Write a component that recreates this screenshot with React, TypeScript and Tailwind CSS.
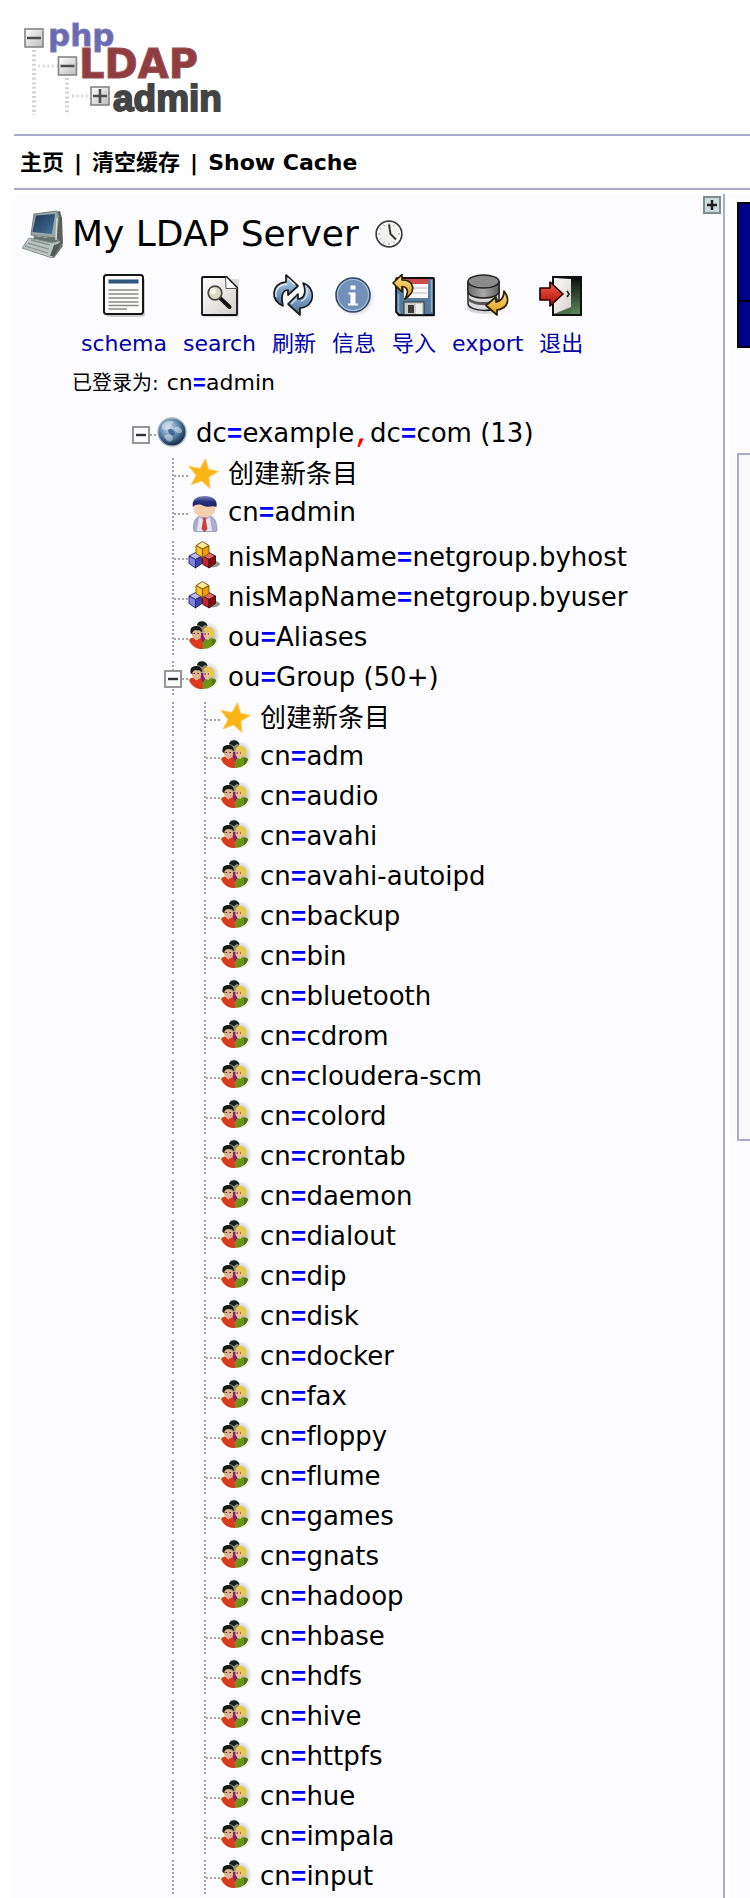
import type { ReactNode } from "react";

const DOTS = "#a6a6a6";

function SharedDefs() {
  return (
    <svg className="absolute h-0 w-0" aria-hidden="true">
      <defs>
        <linearGradient id="blue" x1="0" y1="0" x2="0" y2="1">
          <stop offset="0" stopColor="#c3d6e8" />
          <stop offset="0.5" stopColor="#7fa3c8" />
          <stop offset="1" stopColor="#44698f" />
        </linearGradient>
        <linearGradient id="gold" x1="0" y1="0" x2="0" y2="1">
          <stop offset="0" stopColor="#fbe28a" />
          <stop offset="1" stopColor="#dc9a0c" />
        </linearGradient>
        <linearGradient id="paper" x1="0" y1="0" x2="1" y2="1">
          <stop offset="0" stopColor="#ffffff" />
          <stop offset="1" stopColor="#d3d0cb" />
        </linearGradient>
        <linearGradient id="steel" x1="0" y1="0" x2="1" y2="0">
          <stop offset="0" stopColor="#6b6b6b" />
          <stop offset="0.5" stopColor="#a9a9a9" />
          <stop offset="1" stopColor="#606060" />
        </linearGradient>
        <linearGradient id="screen" x1="0" y1="0" x2="1" y2="1">
          <stop offset="0" stopColor="#1f3550" />
          <stop offset="0.6" stopColor="#34597f" />
          <stop offset="1" stopColor="#4b769c" />
        </linearGradient>
        <linearGradient id="redArrow" x1="0" y1="0" x2="0" y2="1">
          <stop offset="0" stopColor="#f0604a" />
          <stop offset="1" stopColor="#b00c04" />
        </linearGradient>
        <linearGradient id="darkDoor" x1="0" y1="0" x2="0" y2="1">
          <stop offset="0" stopColor="#0a0d0a" />
          <stop offset="1" stopColor="#5f8a5f" />
        </linearGradient>
        <linearGradient id="hair" x1="0" y1="0" x2="0" y2="1">
          <stop offset="0" stopColor="#7f88c4" />
          <stop offset="0.5" stopColor="#27307c" />
          <stop offset="1" stopColor="#1c2262" />
        </linearGradient>
        <radialGradient id="globe" cx="0.4" cy="0.35" r="0.65">
          <stop offset="0" stopColor="#d4e4f1" />
          <stop offset="0.45" stopColor="#6e97bb" />
          <stop offset="0.8" stopColor="#2d4f77" />
          <stop offset="1" stopColor="#16263c" />
        </radialGradient>
        <radialGradient id="shade">
          <stop offset="0" stopColor="#000000" stopOpacity="0.4" />
          <stop offset="1" stopColor="#000000" stopOpacity="0" />
        </radialGradient>
        <linearGradient id="logoBox" x1="0" y1="0" x2="1" y2="1">
          <stop offset="0" stopColor="#ffffff" />
          <stop offset="1" stopColor="#bdbdbd" />
        </linearGradient>
      </defs>
    </svg>
  );
}

function Logo() {
  return (
    <svg className="h-[102px] w-[204px]" viewBox="0 0 204 102" role="img" aria-label="phpLDAPadmin">
      <g stroke="#d2d2d2" strokeWidth="4" strokeDasharray="2 2.6">
        <path d="M12 34V99M45 62V99" />
        <path d="M16 50H36M50 80H68" strokeWidth="3" stroke="#dcdcdc" />
      </g>
      <g fill="url(#logoBox)" stroke="#858585" strokeWidth="1.6">
        <rect x="3" y="13" width="18" height="18" />
        <rect x="36.500" y="41" width="18" height="18" />
        <rect x="69" y="71" width="18" height="18" />
      </g>
      <path d="M5 22H19M38.500 50H52.500M71 80H85M78 73V87" stroke="#4d4d4d" strokeWidth="2.6" />
      <text x="26" y="30" fontFamily="'DejaVu Sans', sans-serif" fontSize="31" fontWeight="700" fill="#6a6ab2" stroke="#8080bb" strokeWidth="0.8">php</text>
      <text x="57" y="62" fontFamily="'DejaVu Sans', sans-serif" fontSize="40" fontWeight="700" fill="#8f3d40" stroke="#9c5052" strokeWidth="1">LDAP</text>
      <text x="91" y="95" fontFamily="'Liberation Sans', sans-serif" fontSize="37" fontWeight="700" fill="#444444" stroke="#444444" strokeWidth="1.8">admin</text>
    </svg>
  );
}

function ComputerIcon() {
  return (
    <svg className="h-12 w-[44px] shrink-0" viewBox="0 0 44 48" aria-hidden="true">
      <path d="M30 3L38 1L40 8L41 34L36 38L24 34Z" fill="#59615e" />
      <path d="M12 4L35 1L37 6L34 28L9 25Z" fill="#9ba7a4" stroke="#717d7a" />
      <path d="M14 5.500L33 4L30 24L10.500 22Z" fill="url(#screen)" />
      <path d="M12 26L36 29L41 36L32 48L24 45L10 32Z" fill="#68726e" />
      <path d="M7 28L30 33L38 31L30 48L0 38Z" fill="#b9c3c0" stroke="#8d9794" />
      <path d="M9 30L28 35M6 33L27 39M3 36L26 43" stroke="#88928f" strokeWidth="1.300" />
      <path d="M32 35L39 33L32 46L28 46Z" fill="#4f5952" />
      <path d="M35 8L34 30" stroke="#d5dcda" strokeWidth="1.500" />
    </svg>
  );
}

function ClockIcon() {
  return (
    <svg className="h-7 w-7" viewBox="0 0 28 28" aria-hidden="true">
      <circle cx="14" cy="14" r="12.800" fill="#f0f0ee" stroke="#3d3d3d" strokeWidth="1.800" />
      <circle cx="14" cy="14" r="11" fill="none" stroke="#ffffff" strokeWidth="1.500" />
      <path d="M14 3V5M14 23V25M3 14H5M23 14H25M8.500 4.500L9.500 6.200M19.500 4.500L18.500 6.200M4.500 8.500L6.200 9.500M4.500 19.500L6.200 18.500M8.500 23.500L9.500 21.800M19.500 23.500L18.500 21.800" stroke="#999" strokeWidth="1" />
      <path d="M14 4.500L15.500 14L21 19.500" fill="none" stroke="#333" strokeWidth="1.900" />
    </svg>
  );
}

function ToolSvg({ children }: { children: ReactNode }) {
  return (
    <svg className="h-11 w-11" viewBox="0 0 44 44" aria-hidden="true">
      {children}
    </svg>
  );
}

function SchemaIcon() {
  return (
    <ToolSvg>
      <rect x="4" y="4" width="39" height="39" rx="3" fill="#000" opacity="0.18" />
      <rect x="2" y="1" width="39" height="39" rx="2.500" fill="#fbfbfa" stroke="#161616" strokeWidth="2" />
      <rect x="6.500" y="5.500" width="30" height="4" fill="#31557c" />
      <path d="M6.500 16H36.500M6.500 20H36.500M6.500 24H36.500M6.500 28H36.500M6.500 31.500H36.500M6.500 35H25" stroke="#8a8a88" strokeWidth="1.400" />
    </ToolSvg>
  );
}

function SearchIcon() {
  return (
    <ToolSvg>
      <path d="M6 5H41V43H6Z" fill="#000" opacity="0.13" />
      <path d="M5 3H28.500L39 13.500V40Q39 41 38 41H5Q4 41 4 40V4Q4 3 5 3Z" fill="url(#paper)" stroke="#111" strokeWidth="1.800" strokeLinejoin="round" />
      <path d="M27.500 3L28 14.500H39L37 12L29 4Z" fill="#fff" stroke="#555" strokeWidth="1" />
      <path d="M22 24L31.500 33" stroke="#111" strokeWidth="4" strokeLinecap="round" />
      <circle cx="17" cy="19" r="6.800" fill="#d9dcbf" stroke="#4a4a42" strokeWidth="1.700" />
      <circle cx="15" cy="17" r="3" fill="#fafbef" />
    </ToolSvg>
  );
}

function RefreshIcon() {
  return (
    <ToolSvg>
      <path d="M11 32C-2 27 -1 9 14 8V1L26 12L16 21V16C10 16 9 23 11 32Z" fill="url(#blue)" stroke="#1a1a1a" strokeWidth="1.700" strokeLinejoin="round" />
      <path d="M31 9C44 13 44 33 28 34V41L16 30L26 20V25C32 25 35 18 31 9Z" fill="url(#blue)" stroke="#1a1a1a" strokeWidth="1.700" strokeLinejoin="round" />
      <path d="M16 4.500L23 11M4 23C3 15 8 10 15 10.500" stroke="#e6eff6" strokeWidth="1.300" fill="none" />
      <path d="M19 30L24.500 25M29 27C34 26 36 20 35 14" stroke="#dbe7f1" strokeWidth="1.200" fill="none" />
    </ToolSvg>
  );
}

function InfoIcon() {
  return (
    <ToolSvg>
      <ellipse cx="23" cy="24" rx="20" ry="19" fill="url(#shade)" />
      <circle cx="21" cy="21" r="17" fill="#7291b8" stroke="#2f4a6d" strokeWidth="1.600" />
      <circle cx="21" cy="21" r="15.500" fill="none" stroke="#a9bed5" strokeWidth="1.200" />
      <path d="M18.500 11.500H23.500V15.500H18.500ZM16.500 18.500H23.500V29.500H26V31.500H16V29.500H18.500V20.500H16.500Z" fill="#fff" />
    </ToolSvg>
  );
}

function ImportIcon() {
  return (
    <ToolSvg>
      <rect x="5" y="5" width="38" height="38" rx="2" fill="#000" opacity="0.2" />
      <path d="M5 4H41Q42 4 42 5V41H7L4 38V5Z" fill="#557b9f" stroke="#111" strokeWidth="1.800" />
      <path d="M6.500 20V37L8 39M39.500 6V38" stroke="#8fb1cd" strokeWidth="1.500" fill="none" />
      <rect x="12" y="5" width="24" height="19" fill="#fafafa" />
      <rect x="12" y="5" width="24" height="5" fill="#cf4c4c" />
      <path d="M14 14H35M14 19H35" stroke="#b9b9b9" strokeWidth="1.200" />
      <rect x="12" y="28" width="20" height="12.500" fill="#c9ccc9" stroke="#333" />
      <rect x="16" y="31" width="6" height="8" fill="#3c3c38" />
      <rect x="24" y="30" width="6" height="10" fill="#eeeeec" />
      <path d="M1 9L10 0.500V6C22 6 25 17 13 25C17 18 16 13 10 12.500V18Z" fill="url(#gold)" stroke="#2b1d00" strokeWidth="1.700" strokeLinejoin="round" />
    </ToolSvg>
  );
}

function ExportIcon() {
  return (
    <ToolSvg>
      <ellipse cx="19" cy="34" rx="18" ry="6" fill="#000" opacity="0.15" />
      <path d="M2 8V30C4 38 31 39 33 30V8Z" fill="#d9d9d9" stroke="#222" strokeWidth="1.500" />
      <path d="M2 25C4 33 31 33 33 25V22C31 30 4 30 2 22Z" fill="#555" />
      <path d="M2 8V18C4 26 31 26 33 18V8Z" fill="url(#steel)" stroke="#222" strokeWidth="1.400" />
      <ellipse cx="17.500" cy="7.500" rx="15.500" ry="6.500" fill="#8c8c8c" stroke="#222" strokeWidth="1.400" />
      <path d="M38 17C44 25 43 34 31 36V41L20 31.500L30 23V28C36 27 38 23 38 17Z" fill="url(#gold)" stroke="#2b1d00" strokeWidth="1.700" strokeLinejoin="round" />
    </ToolSvg>
  );
}

function LogoutIcon() {
  return (
    <ToolSvg>
      <rect x="14" y="3" width="28" height="38" fill="url(#darkDoor)" stroke="#111" strokeWidth="2" />
      <path d="M15 4L32 5V33L15 40Z" fill="url(#paper)" />
      <path d="M15 40L32 34V40Z" fill="#4d704d" />
      <path d="M28 17L30 20L28 23" fill="none" stroke="#222" strokeWidth="1.600" />
      <path d="M1 14H11V8L24 20L11 32V26H1Z" fill="url(#redArrow)" stroke="#2b0000" strokeWidth="1.700" strokeLinejoin="round" />
    </ToolSvg>
  );
}

function GlobeIcon() {
  return (
    <svg className="h-8 w-8" viewBox="0 0 32 32" aria-hidden="true">
      <circle cx="17" cy="17" r="15" fill="url(#shade)" />
      <circle cx="16" cy="15" r="14" fill="url(#globe)" stroke="#a5b0bb" strokeWidth="1.300" />
      <path d="M6 8C9 4 15 3 18 5C16 8 12 8 11 12C8 14 5 12 6 8ZM18 11C22 8 26 11 26 15C22 18 20 15 18 11ZM8 19C12 16 17 18 17 22C14 27 10 24 8 19Z" fill="#f1f6fa" opacity="0.45" />
      <path d="M12 13C15 10 18 13 19 17C17 20 12 17 12 13Z" fill="#1f4a7c" opacity="0.7" />
    </svg>
  );
}

function StarIcon() {
  return (
    <svg className="h-8 w-8" viewBox="0 0 32 32" aria-hidden="true">
      <path d="M17.500 0.500L20.500 11L30.500 13.500L21 19L22 30.500L13.500 23L3 27L8 17.500L0.500 8L12 10.500Z" fill="#fdb515" stroke="#fbcf6d" strokeWidth="0.800" />
    </svg>
  );
}

function PersonIcon() {
  return (
    <svg className="h-9 w-8" viewBox="0 0 32 36" aria-hidden="true">
      <path d="M8 36Q6 36 5.500 33Q5 22 12 20H22Q29 22 29 34L28 36Z" fill="#a9aed0" stroke="#8e92b2" strokeWidth="0.800" />
      <path d="M11 21L16.500 25L22 21L24 35H9Z" fill="#e4e6f0" />
      <path d="M15 21H18L17.800 24L19.500 33L16.500 36L13.500 33L15.200 24Z" fill="#cf3c3c" />
      <ellipse cx="16.500" cy="12.500" rx="11" ry="9" fill="#f6cfb0" />
      <path d="M5 11C3 3 10 0 17 0C25 0 30 4 28.500 11C24 9 21 12 16 10C11 8 8 8 5 11Z" fill="url(#hair)" />
    </svg>
  );
}

function BlocksIcon() {
  return (
    <svg className="h-8 w-8" viewBox="0 0 32 32" aria-hidden="true">
      <ellipse cx="23" cy="23" rx="9" ry="3.500" fill="#000" opacity="0.4" />
      <g strokeWidth="0.900">
        <g stroke="#26265c">
          <path d="M1 15L7.500 11.500L14 15L7.500 18.500Z" fill="#b9bbf5" />
          <path d="M1 15V22.500L7.500 27V18.500Z" fill="#7f83e6" />
          <path d="M14 15V22.500L7.500 27V18.500Z" fill="#3d42a8" />
        </g>
        <g stroke="#4e0b0b">
          <path d="M14.500 15L21 11.500L27.500 15L21 18.500Z" fill="#dd6a6a" />
          <path d="M14.500 15V22.500L21 27V18.500Z" fill="#c2272b" />
          <path d="M27.500 15V22.500L21 27V18.500Z" fill="#7d1115" />
        </g>
        <g stroke="#7a5000">
          <path d="M8 4.500L14.500 0.500L21 4.500L14.500 8Z" fill="#ffe9a0" />
          <path d="M8 4.500V12.500L14.500 16.500V8Z" fill="#fcc419" />
          <path d="M21 4.500V12.500L14.500 16.500V8Z" fill="#f09c06" />
        </g>
      </g>
    </svg>
  );
}

function GroupIcon() {
  return (
    <svg className="h-8 w-8" viewBox="0 0 32 32" aria-hidden="true">
      <ellipse cx="21" cy="15" rx="11" ry="14" fill="url(#shade)" />
      <path d="M10 4H19V9L15 12L11 9Z" fill="#9b8a70" />
      <path d="M9 4.500C9 -1 19 -1.500 19.500 5L17 4L14 6L11 4.500Z" fill="#14221d" />
      <path d="M12 12H18L17 22H13Z" fill="#8c1a78" />
      <path d="M1 19C2 16.500 5 16.500 9 17C14 16.500 15 19 15.200 28C9 28.500 3 25 1 19Z" fill="#dc3a1d" />
      <path d="M3.500 9H13V15L11 18L8 19.500L4.500 16Z" fill="#dfb48a" />
      <path d="M2.500 12C1.500 6 5 5 9 5C13 5.500 14.500 8 13.500 12L12 9.500L7 9L4.500 11V13.500Z" fill="#15191d" />
      <path d="M15.200 28C14.500 21 15.500 17.500 20 17.500C26 17 28 18 28 19.500C26 25 21 28 15.200 28Z" fill="#6c9412" />
      <path d="M24 17.500L28 19.500C27 22 26 24 24 25Z" fill="#4d7008" />
      <path d="M15.500 11H23V16L20.500 19L17.500 18L15.500 15Z" fill="#e6bd8b" />
      <path d="M15.500 11C15.500 6 20 5.500 23 6.500C27 8 27 14 24.500 16.500L22.500 16L21.500 11.500L18 10Z" fill="#e8c94a" />
      <path d="M5.500 12.500H7M9.500 12.500H11M16.500 13H18M20 13H21" stroke="#4a2c14" strokeWidth="1" />
    </svg>
  );
}

function TreeCell({ kind }: { kind: "line" | "branch" | "toggle" | "root" }) {
  if (kind === "line" || kind === "branch") {
    return (
      <svg className="h-[34px] w-8 shrink-0" viewBox="0 0 32 34" aria-hidden="true">
        <path d="M17 0V34" stroke={DOTS} strokeWidth="2" strokeDasharray="2 2" />
        {kind === "branch" && <path d="M18 18H32" stroke={DOTS} strokeWidth="2" strokeDasharray="2 2" />}
      </svg>
    );
  }
  return (
    <button type="button" aria-label="Collapse" className="block h-[34px] w-8 shrink-0">
      <svg className="h-[34px] w-8" viewBox="0 0 32 34" aria-hidden="true">
        {kind === "toggle" && <path d="M17 0V34" stroke={DOTS} strokeWidth="2" strokeDasharray="2 2" />}
        <path d="M26 18H32" stroke={DOTS} strokeWidth="2" strokeDasharray="2 2" />
        <rect x="9" y="10" width="16" height="16" fill="#fcfcff" stroke="#969696" strokeWidth="2" />
        <path d="M12 18H22" stroke="#333" strokeWidth="2.400" />
      </svg>
    </button>
  );
}

function Dn({ text }: { text: string }) {
  return (
    <>
      {text.split(/([=,])/).map((part, i) =>
        part === "=" ? (
          <span key={i} className="font-['Liberation_Mono',monospace] font-bold text-[#0000ff]">=</span>
        ) : part === "," ? (
          <span key={i} className="font-['Liberation_Mono',monospace] font-bold text-[#ff0000]">,</span>
        ) : (
          <span key={i}>{part}</span>
        )
      )}
    </>
  );
}

type Kind = "star" | "person" | "blocks" | "group";

const icons: Record<Kind, ReactNode> = {
  star: <StarIcon />,
  person: <PersonIcon />,
  blocks: <BlocksIcon />,
  group: <GroupIcon />,
};

const heights: Record<Kind, string> = {
  star: "h-[38px]",
  person: "h-[45px]",
  blocks: "h-10",
  group: "h-10",
};

function Row({ kind, label, nested, toggle }: { kind: Kind; label: string; nested?: boolean; toggle?: boolean }) {
  return (
    <li className={`flex items-start ${toggle ? "h-[41px]" : heights[kind]}`}>
      {nested && <TreeCell kind="line" />}
      <TreeCell kind={toggle ? "toggle" : "branch"} />
      <span className="w-8 shrink-0">{icons[kind]}</span>
      <a href="#" className="ml-2 whitespace-nowrap leading-8">
        <Dn text={label} />
      </a>
    </li>
  );
}

const members = [
  "adm", "audio", "avahi", "avahi-autoipd", "backup", "bin", "bluetooth", "cdrom", "cloudera-scm", "colord",
  "crontab", "daemon", "dialout", "dip", "disk", "docker", "fax", "floppy", "flume", "games", "gnats", "hadoop",
  "hbase", "hdfs", "hive", "httpfs", "hue", "impala", "input",
];

const tools = [
  { label: "schema", icon: <SchemaIcon /> },
  { label: "search", icon: <SearchIcon /> },
  { label: "刷新", icon: <RefreshIcon /> },
  { label: "信息", icon: <InfoIcon /> },
  { label: "导入", icon: <ImportIcon /> },
  { label: "export", icon: <ExportIcon /> },
  { label: "退出", icon: <LogoutIcon /> },
];

export default function App() {
  return (
    <div className="overflow-x-hidden bg-white pl-[14px] font-['DejaVu_Sans','Noto_Sans_CJK_SC',sans-serif] text-black [font-variant-ligatures:none]">
      <SharedDefs />
      <header>
        <div className="h-[134px] pl-2 pt-4">
          <Logo />
        </div>
        <nav className="flex h-14 items-center gap-[10px] whitespace-nowrap border-y-2 border-[#aaaacc] pl-[6px] text-[22px] font-bold">
          <a href="#">主页</a>
          <span>|</span>
          <a href="#">清空缓存</a>
          <span>|</span>
          <a href="#">Show Cache</a>
        </nav>
      </header>
      <div className="mt-1 flex">
        <aside className="w-[711px] shrink-0 border-r-2 border-[#aaaacc] bg-[#fcfcff]">
          <div className="flex items-start pl-2">
            <div className="mt-4">
              <ComputerIcon />
            </div>
            <h1 className="ml-[6px] mt-4 flex items-center gap-4 whitespace-nowrap text-[36px] leading-[48px]">
              My LDAP Server
              <ClockIcon />
            </h1>
            <button type="button" aria-label="Expand" className="ml-auto mr-[2px] mt-[2px]">
              <svg className="h-[18px] w-[18px]" viewBox="0 0 18 18" aria-hidden="true">
                <rect x="1" y="1" width="16" height="16" fill="#cfdadd" stroke="#7f8f90" strokeWidth="2" />
                <path d="M4 9H14M9 4V14" stroke="#1c1c1c" strokeWidth="2.400" />
              </svg>
            </button>
          </div>
          <ul className="mt-4 flex gap-4 pl-[67px] text-[22px] leading-8 text-[#0000aa]">
            {tools.map((t) => (
              <li key={t.label}>
                <a href="#" className="flex flex-col items-center gap-[10px] whitespace-nowrap">
                  {t.icon}
                  {t.label}
                </a>
              </li>
            ))}
          </ul>
          <p className="mt-[7px] flex items-baseline gap-2 pl-[58px] text-[22px] leading-8">
            <span className="text-[20px]">已登录为:</span>
            <span><Dn text="cn=admin" /></span>
          </p>
          <ul className="mt-4 pl-[142px] text-[26px]">
            <li className="-ml-8 flex h-[41px] items-start">
              <TreeCell kind="root" />
              <span className="w-8 shrink-0"><GlobeIcon /></span>
              <a href="#" className="ml-2 whitespace-nowrap leading-8">
                <Dn text="dc=example,dc=com (13)" />
              </a>
            </li>
            <Row kind="star" label="创建新条目" />
            <Row kind="person" label="cn=admin" />
            <Row kind="blocks" label="nisMapName=netgroup.byhost" />
            <Row kind="blocks" label="nisMapName=netgroup.byuser" />
            <Row kind="group" label="ou=Aliases" />
            <Row kind="group" label="ou=Group (50+)" toggle />
            <Row kind="star" label="创建新条目" nested />
            {members.map((m) => (
              <Row key={m} kind="group" label={`cn=${m}`} nested />
            ))}
          </ul>
        </aside>
        <main className="ml-1 min-w-0 flex-1 bg-[#fcfcff] pl-2 pt-2">
          <div className="border-2 border-r-0 border-black bg-[#00008b]">
            <div className="h-[98px] border-b-2 border-black" />
            <div className="h-11" />
          </div>
          <div className="mt-[105px] h-[688px] border-2 border-r-0 border-[#aaaacc] bg-[#f9f9fa]" />
        </main>
      </div>
    </div>
  );
}
